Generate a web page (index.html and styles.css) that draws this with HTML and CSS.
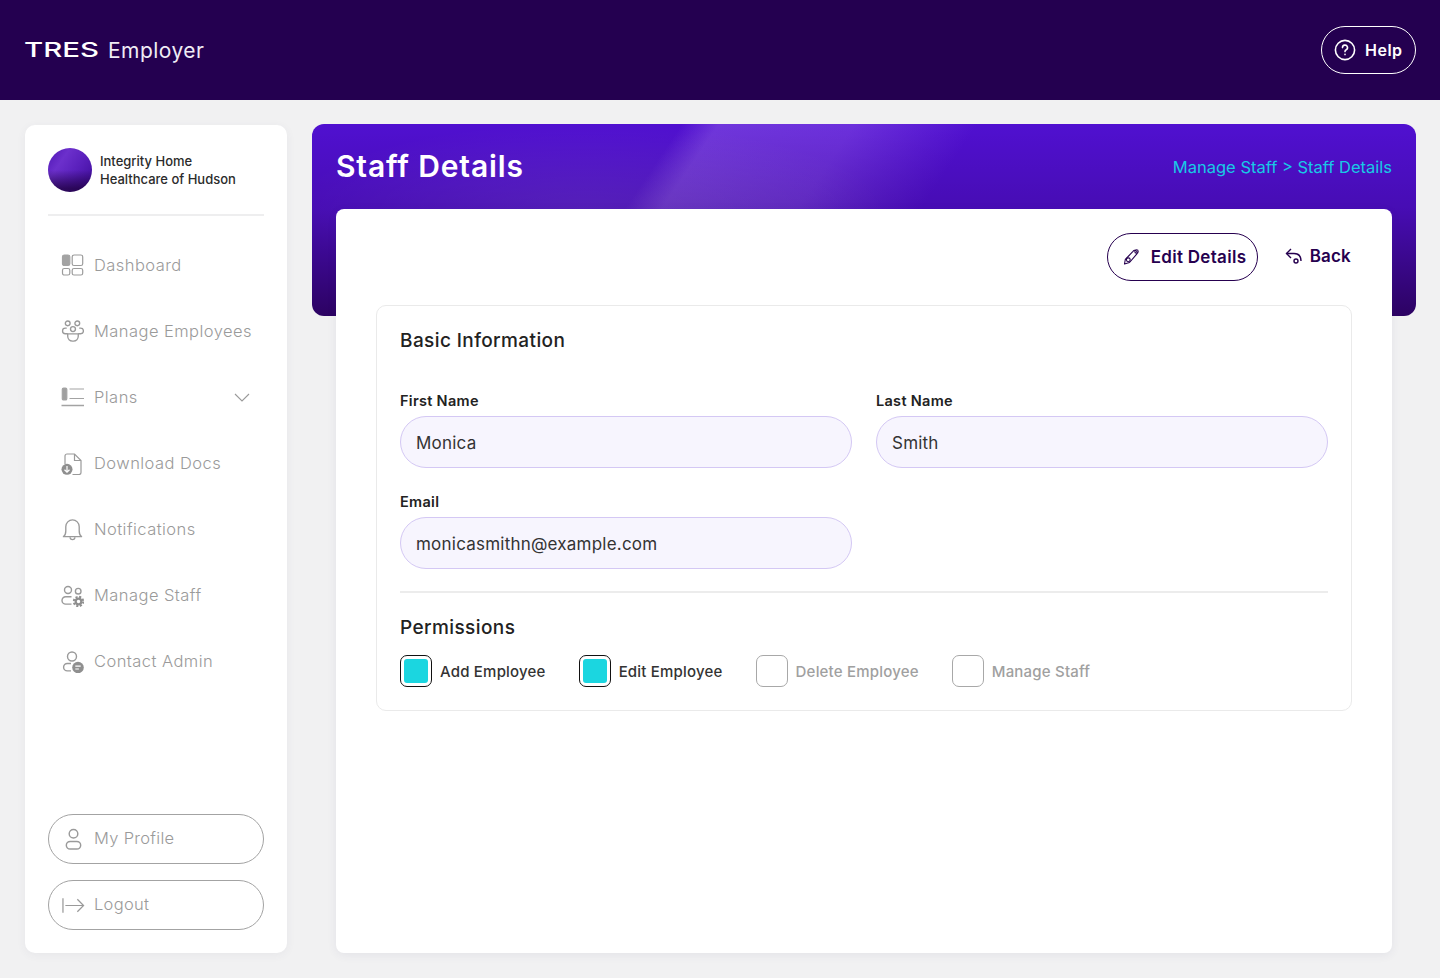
FILE: index.html
```html
<!DOCTYPE html>
<html lang="en">
<head>
<meta charset="UTF-8">
<title>Staff Details</title>
<link rel="stylesheet" href="styles.css">
</head>
<body>

<header class="topbar">
  <div class="logo"><span class="logo-mark">TRES</span><span class="logo-name">Employer</span></div>
  <a class="help-btn">
    <svg width="22" height="22" viewBox="0 0 22 22" fill="none" stroke="#fff" stroke-width="1.6" stroke-linecap="round"><circle cx="11" cy="11" r="9.6"/><path d="M8.5 8.6a2.5 2.5 0 1 1 3.7 2.2c-.8.4-1.2.9-1.2 1.8"/><path d="M11 15.4v.2"/></svg>
    Help
  </a>
</header>

<div class="layout">
  <aside class="sidebar">
    <div class="org">
      <div class="org-avatar"></div>
      <div class="org-name">Integrity Home<br>Healthcare of Hudson</div>
    </div>

    <nav class="nav">
      <a class="nav-item">
        <svg class="icon" viewBox="0 0 23 23" fill="none" stroke="#9c9c9c" stroke-width="1.2"><rect x="1.500" y="1" width="7.300" height="10.500" rx="1.800" fill="#a3a3a3" stroke="#a3a3a3"/><rect x="11.200" y="1" width="10.500" height="10.500" rx="1.800"/><rect x="1.500" y="14.500" width="7.300" height="6.500" rx="1.800"/><rect x="11.200" y="14.500" width="10.500" height="6.500" rx="1.800"/></svg>
        Dashboard
      </a>
      <a class="nav-item">
        <svg class="icon" viewBox="0 0 24 24" fill="none" stroke="#9a9a9a" stroke-width="1.4"><circle cx="7" cy="3.500" r="2.500"/><circle cx="17" cy="3.500" r="2.500"/><circle cx="12.500" cy="9.500" r="2.600"/><path d="M6 8.500H4.500a2.900 2.900 0 0 0 0 5.800H7M19 8.500h1.500a2.900 2.900 0 0 1 0 5.800H18"/><path d="M7 14.500h11v2.500a5 5 0 0 1-5 5h-1a5 5 0 0 1-5-5z"/></svg>
        Manage Employees
      </a>
      <a class="nav-item">
        <svg class="icon" viewBox="0 0 23 23" fill="none" stroke="#a3a3a3" stroke-width="1.200"><rect x="1.300" y="2" width="4.500" height="12" rx="1.300" fill="#a0a0a0"/><path d="M8.500 3H23M8.500 12.500H23"/><path d="M.5 19.500H23" stroke-width="1.500"/></svg>
        Plans
        <svg class="chevron" width="16" height="9" viewBox="0 0 16 9" fill="none" stroke="#9a9a9a" stroke-width="1.100"><path d="M1 1l7 7 7-7"/></svg>
      </a>
      <a class="nav-item">
        <svg class="icon" viewBox="0 0 23 23" fill="none" stroke="#9a9a9a" stroke-width="1.200"><path d="M4 12V4a2 2 0 0 1 2-2h7.500l6.500 6.500V20.500a2 2 0 0 1-2 2H11.500"/><path d="M13.500 2v6.500H20"/><circle cx="6" cy="17.300" r="5.500" fill="#8f8f8f" stroke="none"/><path d="M6 14v6M3.500 17.800L6 20.200l2.500-2.400" stroke="#fff"/></svg>
        Download Docs
      </a>
      <a class="nav-item">
        <svg class="icon" viewBox="0 0 24 24" fill="none" stroke="#9a9a9a" stroke-width="1.400"><path d="M2.500 19.500c2-1.500 2.500-3 2.500-6V9a7 7 0 0 1 14 0v4.500c0 3 .5 4.500 2.500 6z" stroke-linejoin="round"/><path d="M9.500 20a2.500 2.500 0 0 0 5 0"/></svg>
        Notifications
      </a>
      <a class="nav-item">
        <svg class="icon" viewBox="0 0 23 23" fill="none" stroke="#9a9a9a" stroke-width="1.400"><circle cx="7" cy="6" r="3.500"/><circle cx="17.200" cy="7.200" r="2.800"/><path d="M10.500 12.700H4.700a3.700 3.700 0 0 0 0 7.400h5.800"/><circle cx="17.500" cy="17.500" r="4.700" stroke="#8f8f8f" stroke-width="2" stroke-dasharray="2.100 1.600"/><circle cx="17.500" cy="17.500" r="2.800" stroke="#8f8f8f" stroke-width="2.200"/></svg>
        Manage Staff
      </a>
      <a class="nav-item">
        <svg class="icon" viewBox="0 0 23 23" fill="none" stroke="#9a9a9a" stroke-width="1.400"><circle cx="11" cy="6.500" r="4.500"/><path d="M10 13.500H6.300a3.700 3.700 0 0 0 0 7.400H10"/><circle cx="17" cy="17.500" r="5.800" fill="#8f8f8f" stroke="none"/><path d="M14.300 16.200h5.400M14.300 19h3.600" stroke="#fff" stroke-width="1.200"/></svg>
        Contact Admin
      </a>
    </nav>

    <div class="side-actions">
      <a class="side-btn">
        <svg class="icon" viewBox="0 0 24 24" fill="none" stroke="#9a9a9a" stroke-width="1.500"><circle cx="12" cy="6" r="4.500"/><rect x="4.500" y="14" width="15" height="8" rx="4"/></svg>
        My Profile
      </a>
      <a class="side-btn">
        <svg class="icon" viewBox="0 0 24 24" fill="none" stroke="#9a9a9a" stroke-width="1.300"><path d="M1 4.500v15M3.500 12h19M16 5.500l6.500 6.500-6.500 6.500"/></svg>
        Logout
      </a>
    </div>
  </aside>

  <main class="content">
    <section class="banner">
      <div class="banner-head">
        <h1>Staff Details</h1>
        <div class="crumbs">Manage Staff &gt; Staff Details</div>
      </div>

      <div class="card">
        <div class="card-actions">
          <a class="edit-btn">
            <svg width="17" height="16" viewBox="0 0 17 16" fill="none" stroke="#26004f" stroke-width="1.100" stroke-linejoin="round"><path d="M1.500 15l.8-4.500L10 2.300a2.300 2.300 0 0 1 3.700 2.800L6.500 13.500z"/><circle cx="5.300" cy="10.800" r="1.900"/><circle cx="13.500" cy="2.500" r="1.700"/></svg>
            Edit Details
          </a>
          <a class="back-btn">
            <svg width="18" height="18" viewBox="0 0 18 18" fill="none" stroke="#26004f" stroke-width="1.400"><path d="M6 2L1.500 6.500 6 11"/><path d="M1.500 6.500H9c4 0 7 2.500 7 7.500"/><circle cx="11" cy="14" r="2"/></svg>
            Back
          </a>
        </div>

        <div class="panel">
          <h2>Basic Information</h2>
          <div class="form-grid">
            <div class="field">
              <label>First Name</label>
              <div class="input">Monica</div>
            </div>
            <div class="field">
              <label>Last Name</label>
              <div class="input">Smith</div>
            </div>
            <div class="field">
              <label>Email</label>
              <div class="input">monicasmithn@example.com</div>
            </div>
          </div>
          <hr class="divider">
          <h2 class="perm-title">Permissions</h2>
          <div class="perms">
            <div class="perm on"><span class="box"></span>Add Employee</div>
            <div class="perm on"><span class="box"></span>Edit Employee</div>
            <div class="perm"><span class="box"></span>Delete Employee</div>
            <div class="perm"><span class="box"></span>Manage Staff</div>
          </div>
        </div>
      </div>
    </section>
  </main>
</div>

</body>
</html>
```

FILE: styles.css
```css
* {
  box-sizing: border-box;
}

body {
  margin: 0;
  background: #f1f1f2;
  color: #222;
  font-family: Inter, "Open Sans", sans-serif;
  height: 978px;
  overflow: hidden;
}

.topbar {
  height: 100px;
  background: #240050;
  display: flex;
  align-items: center;
  justify-content: space-between;
  padding: 0 24px 0 24px;
}

.logo {
  display: flex;
  align-items: center;
  color: #fff;
}

.logo-mark {
  display: inline-block;
  width: 76px;
  font-size: 20px;
  font-weight: 500;
  transform: scaleX(1.47);
  transform-origin: left center;
  line-height: 1;
}

.logo-name {
  margin-left: 8px;
  font-size: 21px;
  font-weight: 400;
  color: #f0ecf5;
  letter-spacing: 0.45px;
}

.help-btn {
  width: 95px;
  height: 48px;
  border: 1px solid #fff;
  border-radius: 24px;
  display: flex;
  align-items: center;
  gap: 9px;
  padding-left: 12px;
  color: #fff;
  font-size: 16px;
  font-weight: 600;
  letter-spacing: 0.5px;
}

.layout {
  display: grid;
  grid-template-columns: 262px 1104px;
  gap: 25px;
  padding: 24px 24px 0 25px;
}

.sidebar {
  margin-top: 1px;
  height: 828px;
  background: #fff;
  border-radius: 10px;
  box-shadow: 0 2px 10px rgba(70, 60, 110, 0.06);
  padding: 23px 23px 23px;
  display: flex;
  flex-direction: column;
}

.org {
  display: flex;
  align-items: center;
  gap: 8px;
  padding-bottom: 22px;
  border-bottom: 2px solid #eeeeef;
}

.org-avatar {
  width: 44px;
  height: 44px;
  border-radius: 50%;
  background: linear-gradient(180deg, rgba(30, 0, 60, 0) 50%, rgba(30, 0, 60, 0.75) 92%), linear-gradient(124deg, #4e14b4 0%, #6c30cc 30%, #5a20bc 58%, #3c0a98 100%);
}

.org-name {
  font-size: 13px;
  font-weight: 500;
  line-height: 18px;
  color: #2b2b2b;
}

.nav {
  margin-top: 16px;
  flex: 1;
}

.nav-item {
  height: 66px;
  display: flex;
  align-items: center;
  gap: 10px;
  padding-left: 13px;
  color: #9a9a9a;
  font-size: 16.500px;
  font-weight: 300;
  letter-spacing: 0.45px;
}

.icon {
  width: 23px;
  height: 23px;
  flex: none;
}

.chevron {
  margin-left: auto;
  margin-right: 14px;
}

.side-actions {
  display: flex;
  flex-direction: column;
  gap: 16px;
}

.side-btn {
  height: 50px;
  border: 1px solid #a3a3a3;
  border-radius: 25px;
  display: flex;
  align-items: center;
  gap: 9px;
  padding: 0 0 2px 13px;
  color: #9a9a9a;
  font-size: 16.500px;
  font-weight: 300;
  letter-spacing: 0.3px;
}

.side-btn .icon {
  margin-top: 2px;
}

.banner {
  height: 192px;
  padding: 0 24px;
  border-radius: 12px;
  background: linear-gradient(180deg, rgba(38, 0, 79, 0) 0%, rgba(38, 0, 79, 0.22) 44%, rgba(38, 0, 79, 0.85) 100%), radial-gradient(ellipse 300px 90px at 25% 46%, rgba(255, 255, 255, 0.1), rgba(255, 255, 255, 0)), linear-gradient(124deg, #5010d0 0%, #5010d0 30%, #7036dc 33%, #6c30dc 44%, #5010d0 54%);
}

.banner-head {
  height: 85px;
  display: flex;
  align-items: center;
  justify-content: space-between;
}

h1 {
  margin: 0 0 2px;
  font-size: 30px;
  font-weight: 600;
  letter-spacing: 0.85px;
  color: #fff;
}

.crumbs {
  color: #18c9e6;
  font-size: 16.500px;
  font-weight: 400;
}

.card {
  height: 744px;
  background: #fff;
  border-radius: 8px;
  box-shadow: 0 2px 10px rgba(70, 60, 110, 0.08);
  padding: 24px 40px 0;
}

.card-actions {
  display: flex;
  justify-content: flex-end;
  align-items: center;
  height: 48px;
  gap: 27px;
  margin-bottom: 24px;
}

.edit-btn {
  width: 151px;
  height: 48px;
  border: 1px solid #26004f;
  border-radius: 24px;
  display: flex;
  align-items: center;
  gap: 11px;
  padding-left: 15px;
  color: #26004f;
  font-size: 17px;
  font-weight: 600;
  letter-spacing: 0.3px;
}

.back-btn {
  display: flex;
  align-items: center;
  gap: 7px;
  padding-right: 1px;
  color: #26004f;
  font-size: 17px;
  font-weight: 600;
  letter-spacing: 0.2px;
  margin-top: -2px;
}

.panel {
  height: 406px;
  border: 1px solid #eaeaea;
  border-radius: 10px;
  padding: 23px 23px 0;
}

h2 {
  margin: 0;
  font-size: 19px;
  font-weight: 500;
  letter-spacing: 0.4px;
  color: #222;
  line-height: 24px;
}

.form-grid {
  display: grid;
  grid-template-columns: 452px 452px;
  gap: 24px 24px;
  margin-top: 38px;
}

.field label {
  display: block;
  font-size: 14.500px;
  font-weight: 600;
  letter-spacing: 0.3px;
  line-height: 18px;
  padding-top: 1px;
  height: 18px;
  margin-bottom: 7px;
}

.input {
  height: 52px;
  border: 1px solid #d4c8f4;
  border-radius: 26px;
  background: #f7f5fe;
  display: flex;
  align-items: center;
  padding: 1px 0 0 15px;
  font-size: 17px;
  letter-spacing: 0.22px;
  color: #333;
}

.divider {
  border: 0;
  height: 2px;
  background: #ececec;
  margin: 22px 0 0;
}

.perm-title {
  margin-top: 23px;
}

.perms {
  display: flex;
  gap: 33px;
  margin-top: 15px;
}

.perm {
  display: flex;
  align-items: center;
  gap: 8px;
  font-size: 15px;
  font-weight: 500;
  letter-spacing: 0.2px;
  color: #a0a0a0;
}

.perm.on {
  color: #333;
}

.box {
  width: 32px;
  height: 32px;
  border: 1px solid #a8a8a8;
  border-radius: 7px;
  background: #fff;
  display: flex;
  align-items: center;
  justify-content: center;
}

.perm.on .box {
  border-color: #111;
}

.perm.on .box::before {
  content: "";
  width: 24px;
  height: 24px;
  border-radius: 3px;
  background: #1bd6e0;
}
```
